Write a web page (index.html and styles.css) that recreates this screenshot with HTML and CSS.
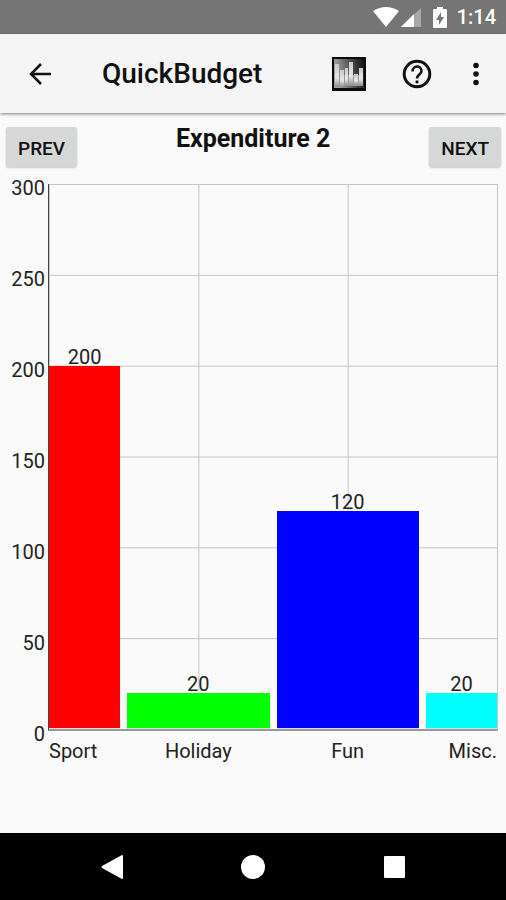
FILE: index.html
```html
<!DOCTYPE html>
<html lang="en">

<head>
  <meta charset="UTF-8">
  <meta name="viewport" content="width=device-width, initial-scale=1.0">
  <title>QuickBudget</title>
  <link rel="stylesheet" href="styles.css">
</head>

<body>
  <!-- Status bar -->
  <div class="status-bar">
    <svg class="wifi" width="26" height="20" viewBox="0 0 26 20">
      <path d="M0 4 Q13 -4 26 4 L13 20 Z" fill="#fff" />
    </svg>
    <svg class="signal" width="20" height="19" viewBox="0 0 20 19">
      <path d="M20 0 V19 H0 Z" fill="#a8a8a8" />
      <path d="M13 6 V19 H0 Z" fill="#fff" />
    </svg>
    <svg class="battery" width="14" height="21" viewBox="0 0 14 21">
      <path d="M4 0 H10 V2 H13 Q14 2 14 3 V20 Q14 21 13 21 H1 Q0 21 0 20 V3 Q0 2 1 2 H4 Z" fill="#fff" />
      <path d="M8 5 L3 13 H6 V18 L11 10 H8 Z" fill="#757575" />
    </svg>
    <span>1:14</span>
  </div>

  <!-- App bar -->
  <header class="app-bar">
    <button class="icon-button" aria-label="Back">
      <svg width="24" height="24" viewBox="0 0 24 24" fill="none" stroke="#111" stroke-width="2.500">
        <path d="M24 12 H4 M14 2 L4 12 L14 22" />
      </svg>
    </button>
    <h1>QuickBudget</h1>
    <button class="icon-button chart-button" aria-label="Chart">
      <svg width="34" height="34" viewBox="0 0 34 34">
        <defs>
          <linearGradient id="chartBack" x1="0" y1="0.2" x2="1" y2="0">
            <stop offset="0" stop-color="#a4a4a4" />
            <stop offset="0.6" stop-color="#444" />
            <stop offset="1" stop-color="#111" />
          </linearGradient>
          <linearGradient id="chartBar" x1="0" y1="0" x2="0" y2="1">
            <stop offset="0" stop-color="#c8c8c8" />
            <stop offset="0.6" stop-color="#e8e8e8" />
            <stop offset="1" stop-color="#8c8c8c" />
          </linearGradient>
        </defs>
        <rect width="34" height="34" fill="#0a0a0a" />
        <rect x="2" y="2" width="30" height="29" fill="url(#chartBack)" />
        <rect x="3" y="18" width="28" height="11" fill="#999" />
        <g fill="url(#chartBar)">
          <rect x="3" y="7" width="4" height="23" />
          <rect x="8" y="13" width="4" height="17" />
          <rect x="13" y="11" width="3" height="18" />
          <rect x="17" y="5" width="4" height="24" />
          <rect x="22" y="17" width="4" height="11" />
          <rect x="27" y="11" width="4" height="18" />
        </g>
      </svg>
    </button>
    <button class="icon-button help-button" aria-label="Help">
      <svg width="30" height="30" viewBox="0 0 30 30" fill="none" stroke="#111" stroke-width="3">
        <circle cx="15" cy="15" r="12.800" />
        <path d="M10.500 12.500 C10.500 6 19.500 6 19.500 12 C19.500 15.500 15 15.500 15 19.500" stroke-width="2.600" />
        <rect x="13.600" y="21.500" width="2.800" height="2.800" fill="#111" stroke="none" />
      </svg>
    </button>
    <button class="icon-button" aria-label="More options">
      <svg width="6" height="24" viewBox="0 0 6 24" fill="#111">
        <circle cx="3" cy="3.500" r="2.800" />
        <circle cx="3" cy="12" r="2.800" />
        <circle cx="3" cy="20.500" r="2.800" />
      </svg>
    </button>
  </header>

  <main>
    <div class="pager">
      <button class="button">PREV</button>
      <h2>Expenditure 2</h2>
      <button class="button">NEXT</button>
    </div>

    <!-- Bar chart, scale 0 to 300 -->
    <div class="chart">
      <div class="y-axis">
        <span>300</span>
        <span>250</span>
        <span>200</span>
        <span>150</span>
        <span>100</span>
        <span>50</span>
        <span>0</span>
      </div>
      <div class="plot">
        <div class="column">
          <span>200</span>
          <div class="bar red" style="height: 66.67%"></div>
        </div>
        <div class="column">
          <span>20</span>
          <div class="bar green" style="height: 6.67%"></div>
        </div>
        <div class="column">
          <span>120</span>
          <div class="bar blue" style="height: 40%"></div>
        </div>
        <div class="column">
          <span>20</span>
          <div class="bar cyan" style="height: 6.67%"></div>
        </div>
      </div>
      <div class="x-axis">
        <span>Sport</span>
        <span>Holiday</span>
        <span>Fun</span>
        <span>Misc.</span>
      </div>
    </div>
  </main>

  <!-- Navigation bar -->
  <nav class="nav-bar">
    <button class="icon-button" aria-label="Back">
      <svg width="24" height="24" viewBox="0 0 24 24" fill="#fff">
        <path d="M22 0 Q23 0 23 1 V23 Q23 24 22 24 L2 13 Q1 12 2 11 Z" />
      </svg>
    </button>
    <button class="icon-button" aria-label="Home">
      <svg width="24" height="24" viewBox="0 0 24 24" fill="#fff">
        <circle cx="12" cy="12" r="12" />
      </svg>
    </button>
    <button class="icon-button" aria-label="Recent apps">
      <svg width="24" height="24" viewBox="0 0 24 24" fill="#fff">
        <rect x="2" y="1" width="21" height="22" rx="1" />
      </svg>
    </button>
  </nav>
</body>

</html>
```
FILE: styles.css
```css
* {
  box-sizing: border-box;
}

body {
  display: flex;
  flex-direction: column;
  min-height: 100vh;
  margin: 0;
  background-color: #fafafa;
  color: #111;
  font-family: Roboto, Arial, sans-serif;
}

button {
  font-family: inherit;
  cursor: pointer;
}

svg {
  display: block;
}

/* Status bar */
.status-bar {
  display: flex;
  align-items: center;
  justify-content: flex-end;
  height: 34px;
  padding-right: 10px;
  background-color: #757575;
  color: white;
  font-size: 20px;
  font-weight: 500;
  line-height: 36px;
}

.signal {
  margin-left: 2px;
}

.battery {
  margin: 0 10px 0 12px;
}

/* App bar */
.app-bar {
  display: flex;
  align-items: center;
  height: 79px;
  padding: 0 27px;
  background-color: #f5f5f5;
  box-shadow: 0 1px 3px rgba(0, 0, 0, 0.5);
}

.app-bar h1 {
  flex: 1;
  margin: 0 0 0 51px;
  font-size: 28px;
  font-weight: 500;
  line-height: 36px;
}

.icon-button {
  padding: 0;
  border: none;
  background: none;
}

.help-button {
  margin: 0 41px 0 36px;
}

/* Title and buttons */
main {
  display: flex;
  flex: 1;
  flex-direction: column;
}

.pager {
  display: flex;
  align-items: flex-start;
  justify-content: space-between;
  height: 71px;
  padding: 10px 5px 0 6px;
}

.pager h2 {
  margin: 0;
  font-size: 25px;
  font-weight: 700;
  line-height: 32px;
}

.button {
  height: 40px;
  margin-top: 4px;
  padding: 2px 12px 0;
  border: none;
  border-radius: 3px;
  background-color: #d6d7d7;
  box-shadow: 0 1px 2px rgba(0, 0, 0, 0.2);
  color: #111;
  font-size: 19px;
  font-weight: 500;
}

/* Chart */
.chart {
  display: grid;
  flex: 1;
  grid-template-columns: 48px 1fr;
  grid-template-rows: 1fr auto;
  padding: 0 8px 72px 0;
  color: #222;
  font-size: 20px;
  line-height: 20px;
}

.y-axis {
  display: flex;
  flex-direction: column;
  justify-content: space-between;
  margin: -6px 0 -13px;
  padding-right: 3px;
  text-align: right;
}

.plot {
  display: grid;
  grid-template-columns: 1fr 2fr 2fr 1fr;
  column-gap: 7px;
  border-right: 1px solid #c4c4c4;
  border-bottom: 2px solid #999;
  border-left: 1px solid #444;
  background-image:
    linear-gradient(#c4c4c4 1px, transparent 1px),
    linear-gradient(to right, #c4c4c4 1px, transparent 1px);
  background-size: 100% calc(100% / 6), calc(100% / 3) 100%;
}

.column {
  display: flex;
  flex-direction: column;
  justify-content: flex-end;
  text-align: center;
}

.column span {
  line-height: 18px;
}

.bar {
  flex: none;
  border-bottom: 1px solid #ddd;
}

.red {
  background-color: #f00;
}

.green {
  background-color: #0f0;
}

.blue {
  background-color: #00f;
}

.cyan {
  background-color: #0ff;
}

.x-axis {
  display: grid;
  grid-column: 2;
  grid-template-columns: 1fr 2fr 2fr 1fr;
  column-gap: 7px;
  padding: 10px 1px 0;
  text-align: center;
}

.x-axis span:first-child {
  text-align: left;
}

.x-axis span:last-child {
  text-align: right;
}

/* Navigation bar */
.nav-bar {
  display: flex;
  align-items: center;
  justify-content: center;
  gap: 117px;
  height: 67px;
  background-color: black;
}
```
